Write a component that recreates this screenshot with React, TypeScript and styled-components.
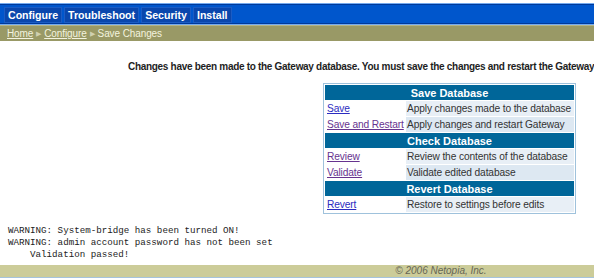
import React from "react";
import styled, { createGlobalStyle } from "styled-components";

const Global = createGlobalStyle`
  html, body { margin: 0; padding: 0; background: #ffffff; overflow: hidden; }
  body { font-family: "Liberation Sans", Arial, sans-serif; }
`;

const Page = styled.div`
  width: 882px;
  padding-top: 3px;
`;

const TopBar = styled.nav`
  display: flex;
  gap: 2px;
  height: 17px;
  padding: 3px 4px 0;
  background: #0056cc;
  border-top: 1px solid #74aaf0;
  border-bottom: 1px solid #74aaf0;
  box-shadow: inset 0 1px 0 #003a9a, inset 0 -1px 0 #003a9a;
`;

const Tab = styled.a`
  display: flex;
  align-items: center;
  height: 16px;
  padding: 0 4px;
  background: #0a47ad;
  color: #ffffff;
  font-weight: bold;
  font-size: 10.6px;
  text-decoration: none;
  box-shadow: inset 0 0 0 1px #1b5cc4;
`;

const Crumbs = styled.div`
  display: flex;
  align-items: center;
  gap: 3px;
  height: 15px;
  padding-left: 7px;
  background: #999966;
  border-top: 1px solid #b4b488;
  font-size: 10px;
  letter-spacing: -0.1px;
  color: #f3f3df;
`;

const CrumbLink = styled.a`
  color: #f3f3df;
  text-decoration: underline;
`;

const Sep = styled.span`
  font-size: 7px;
  color: #d0d0b0;
`;

const Message = styled.p`
  margin: 19px 0 0 128px;
  white-space: nowrap;
  font-size: 10px;
  letter-spacing: -0.3px;
  line-height: 13px;
  font-weight: bold;
  color: #1e1e1e;
`;

const DbTable = styled.table`
  margin: 10px 0 0 323px;
  width: 253px;
  table-layout: fixed;
  border: 1px solid #9fc2dc;
  border-collapse: separate;
  border-spacing: 1px;
  font-size: 10.2px;
  letter-spacing: -0.12px;
`;

const Col = styled.col<{ $w: number }>`
  width: ${(p) => p.$w}px;
`;

const Head = styled.th`
  background: #006699;
  color: #ffffff;
  font-size: 11px;
  letter-spacing: 0;
  font-weight: bold;
  text-align: center;
  height: 15px;
  padding: 0;
`;

const LinkCell = styled.td`
  height: 15px;
  padding: 0 0 0 2px;
  white-space: nowrap;
  overflow: hidden;
`;

const DescCell = styled.td<{ $tint?: boolean }>`
  background: ${(p) => (p.$tint ? "#dde8f2" : "#e8eff6")};
  color: #333333;
  padding: 0 0 0 1px;
  white-space: nowrap;
  overflow: hidden;
`;

const RowLink = styled.a<{ $visited?: boolean }>`
  color: ${(p) => (p.$visited ? "#66338f" : "#2b2bc0")};
  text-decoration: underline;
`;

const Log = styled.pre`
  margin: 11px 0 0 8px;
  font-family: "Liberation Mono", "Courier New", monospace;
  font-size: 9.2px;
  line-height: 12px;
  color: #222222;
`;

const Footer = styled.footer`
  margin-top: 4px;
  height: 12px;
  background: #cccc99;
  border-bottom: 2px solid #a6c4dc;
  text-align: center;
  font-size: 10px;
  line-height: 12px;
  font-style: italic;
  color: #666655;
`;

type Row = { label: string; desc: string; visited?: boolean };
type Section = { title: string; rows: Row[] };

const sections: Section[] = [
  {
    title: "Save Database",
    rows: [
      { label: "Save", desc: "Apply changes made to the database" },
      { label: "Save and Restart", desc: "Apply changes and restart Gateway", visited: true },
    ],
  },
  {
    title: "Check Database",
    rows: [
      { label: "Review", desc: "Review the contents of the database", visited: true },
      { label: "Validate", desc: "Validate edited database", visited: true },
    ],
  },
  {
    title: "Revert Database",
    rows: [{ label: "Revert", desc: "Restore to settings before edits" }],
  },
];

export default function App() {
  return (
    <Page>
      <Global />
      <TopBar>
        <Tab>Configure</Tab>
        <Tab>Troubleshoot</Tab>
        <Tab>Security</Tab>
        <Tab>Install</Tab>
      </TopBar>
      <Crumbs>
        <CrumbLink>Home</CrumbLink>
        <Sep>▶</Sep>
        <CrumbLink>Configure</CrumbLink>
        <Sep>▶</Sep>
        <span>Save Changes</span>
      </Crumbs>
      <Message>
        Changes have been made to the Gateway database. You must save the changes and restart the Gateway
      </Message>
      <DbTable>
        <colgroup>
          <Col $w={80} />
          <Col $w={168} />
        </colgroup>
        <tbody>
          {sections.map((s) => (
            <React.Fragment key={s.title}>
              <tr>
                <Head colSpan={2}>{s.title}</Head>
              </tr>
              {s.rows.map((r, i) => (
                <tr key={r.label}>
                  <LinkCell>
                    <RowLink $visited={r.visited}>{r.label}</RowLink>
                  </LinkCell>
                  <DescCell $tint={i % 2 === 1}>{r.desc}</DescCell>
                </tr>
              ))}
            </React.Fragment>
          ))}
        </tbody>
      </DbTable>
      <Log>{`WARNING: System-bridge has been turned ON!
WARNING: admin account password has not been set
    Validation passed!`}</Log>
      <Footer>© 2006 Netopia, Inc.</Footer>
    </Page>
  );
}
